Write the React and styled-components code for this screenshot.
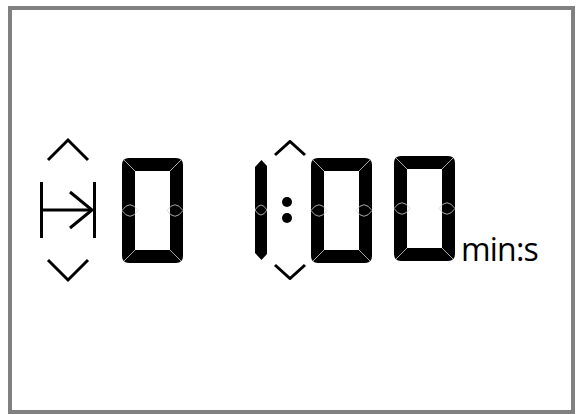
import React from 'react'
import styled, { createGlobalStyle } from 'styled-components'

const GlobalStyle = createGlobalStyle`
    html, body {
        margin: 0;
        padding: 0;
        background: #ffffff;
        font-family: "Open Sans", "DejaVu Sans", sans-serif;
    }
`

const Frame = styled.div`
    box-sizing: border-box;
    margin: 6px 0 0 8px;
    width: 567px;
    height: 408px;
    border: 4px solid #808080;
    background: #ffffff;
    display: flex;
    align-items: center;
`

const Display = styled.div`
    display: flex;
    align-items: center;
`

const ControlColumn = styled.div`
    display: flex;
    flex-direction: column;
    align-items: center;
    gap: 17px;
    width: 56px;
    margin-left: 28px;
    svg { display: block; }
`

const ColonColumn = styled.div`
    display: flex;
    flex-direction: column;
    justify-content: space-between;
    align-items: center;
    height: 140px;
    width: 34px;
    margin-left: 6px;
    svg { display: block; }
`

const DigitBox = styled.svg`
    display: block;
    flex: none;
    margin-left: ${p => p.$gap}px;
`

const UnitGroup = styled.div`
    display: flex;
    align-items: baseline;
    margin-left: ${p => p.$gap}px;
`

const Unit = styled.span`
    font-family: "Open Sans", sans-serif;
    font-size: 32px;
    line-height: 1;
    color: #000;
    letter-spacing: -0.8px;
    margin-left: 6px;
`

const SEG = '#cfcfcf'

function Digit({ gap = 0 }) {
    return (
        <DigitBox $gap={gap} width="61" height="105" viewBox="0 0 61 105">
            <path
                fillRule="evenodd"
                fill="#000"
                d="M7 0 H54 Q61 0 61 7 V98 Q61 105 54 105 H7 Q0 105 0 98 V7 Q0 0 7 0 Z M13 13 V92 H48 V13 Z"
            />
            <g stroke={SEG} strokeWidth="0.8" fill="none">
                <path d="M2 2 L13 13 M59 2 L48 13 M2 103 L13 92 M59 103 L48 92" />
                <path d="M0 52.5 Q8 41 16 52.5 Q8 64 0 52.5" />
                <path d="M45 52.5 Q53 41 61 52.5 Q53 64 45 52.5" />
            </g>
        </DigitBox>
    )
}

function One({ gap = 0 }) {
    return (
        <DigitBox $gap={gap} width="12" height="100" viewBox="0 0 12 100">
            <polygon fill="#000" points="6.5,0 12,6 12,94 6.5,100 0,93 0,7" />
            <path stroke={SEG} strokeWidth="0.8" fill="none" d="M0 50 Q6 40 12 50 Q6 60 0 50" />
        </DigitBox>
    )
}

const Chevron = ({ w, h, pts }) => (
    <svg width={w} height={h} viewBox={`0 0 ${w} ${h}`}>
        <polyline points={pts} fill="none" stroke="#000" strokeWidth="3" />
    </svg>
)

function App() {
    return (
        <>
            <GlobalStyle />
            <Frame>
                <Display>
                    <ControlColumn>
                        <Chevron w={56} h={26} pts="8,23 28,3 48,23" />
                        <svg width="56" height="60" viewBox="0 0 56 60">
                            <g fill="none" stroke="#000" strokeWidth="3">
                                <line x1="1.5" y1="2" x2="1.5" y2="58" />
                                <line x1="54.5" y1="2" x2="54.5" y2="58" />
                                <line x1="1.5" y1="30" x2="52" y2="30" />
                                <polyline points="30,12 52,30 30,48" />
                            </g>
                        </svg>
                        <Chevron w={56} h={26} pts="8,3 28,23 48,3" />
                    </ControlColumn>

                    <Digit gap={26} />
                    <One gap={72} />

                    <ColonColumn>
                        <Chevron w={34} h={17} pts="2,15 17,1.5 32,15" />
                        <svg width="34" height="30" viewBox="0 0 34 30">
                            <circle cx="14" cy="7" r="5" fill="#000" />
                            <circle cx="14" cy="23" r="5" fill="#000" />
                        </svg>
                        <Chevron w={34} h={17} pts="2,2 17,15.5 32,2" />
                    </ColonColumn>

                    <Digit gap={4} />
                    <UnitGroup $gap={22}>
                        <Digit />
                        <Unit>min:s</Unit>
                    </UnitGroup>
                </Display>
            </Frame>
        </>
    )
}

export default App
